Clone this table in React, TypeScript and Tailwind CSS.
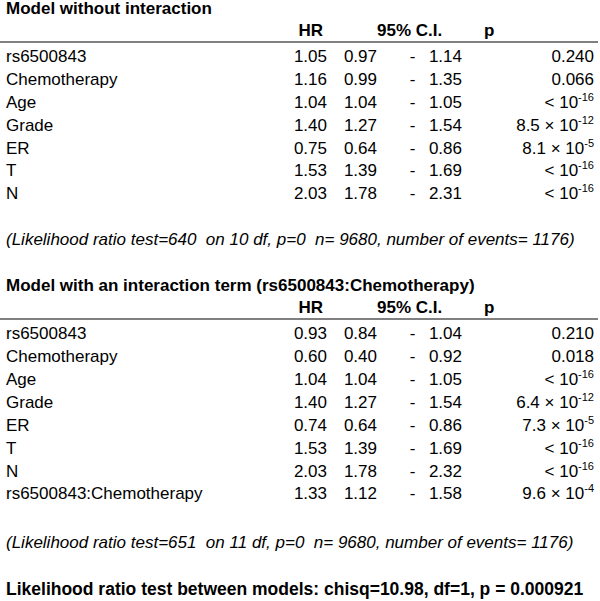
import React from "react";

type Row = { label: string; hr: string; lo: string; hi: string; p: React.ReactNode };

const P = ({ base, exp }: { base: string; exp: string }) => (
  <span>
    {base}
    <sup className="text-[11px] top-[-7px]">{exp}</sup>
  </span>
);

const rows1: Row[] = [
  { label: "rs6500843", hr: "1.05", lo: "0.97", hi: "1.14", p: "0.240" },
  { label: "Chemotherapy", hr: "1.16", lo: "0.99", hi: "1.35", p: "0.066" },
  { label: "Age", hr: "1.04", lo: "1.04", hi: "1.05", p: <P base="< 10" exp="-16" /> },
  { label: "Grade", hr: "1.40", lo: "1.27", hi: "1.54", p: <P base="8.5 × 10" exp="-12" /> },
  { label: "ER", hr: "0.75", lo: "0.64", hi: "0.86", p: <P base="8.1 × 10" exp="-5" /> },
  { label: "T", hr: "1.53", lo: "1.39", hi: "1.69", p: <P base="< 10" exp="-16" /> },
  { label: "N", hr: "2.03", lo: "1.78", hi: "2.31", p: <P base="< 10" exp="-16" /> },
];

const rows2: Row[] = [
  { label: "rs6500843", hr: "0.93", lo: "0.84", hi: "1.04", p: "0.210" },
  { label: "Chemotherapy", hr: "0.60", lo: "0.40", hi: "0.92", p: "0.018" },
  { label: "Age", hr: "1.04", lo: "1.04", hi: "1.05", p: <P base="< 10" exp="-16" /> },
  { label: "Grade", hr: "1.40", lo: "1.27", hi: "1.54", p: <P base="6.4 × 10" exp="-12" /> },
  { label: "ER", hr: "0.74", lo: "0.64", hi: "0.86", p: <P base="7.3 × 10" exp="-5" /> },
  { label: "T", hr: "1.53", lo: "1.39", hi: "1.69", p: <P base="< 10" exp="-16" /> },
  { label: "N", hr: "2.03", lo: "1.78", hi: "2.32", p: <P base="< 10" exp="-16" /> },
  { label: "rs6500843:Chemotherapy", hr: "1.33", lo: "1.12", hi: "1.58", p: <P base="9.6 × 10" exp="-4" /> },
];

const grid = "grid grid-cols-[280px_41px_50px_48px_37px_132px] pl-[6px]";

function Table({ rows }: { rows: Row[] }) {
  return (
    <div>
      <div className={`${grid} mt-[4px] h-[20px] leading-[20px] font-bold`}>
        <div />
        <div className="text-right pr-[4px]">HR</div>
        <div className="col-span-3 pl-[50px] whitespace-nowrap">95% C.I.</div>
        <div className="pl-[22px]">p</div>
      </div>
      <div className="h-[2px] w-[598px] bg-[#808080]" />
      <div className="mt-[3px]">
        {rows.map((r) => (
          <div key={r.label} className={`${grid} h-[22.9px] leading-[22.9px]`}>
            <div className="whitespace-nowrap">{r.label}</div>
            <div className="text-right">{r.hr}</div>
            <div className="text-right">{r.lo}</div>
            <div className="pl-[23px] text-center">-</div>
            <div className="text-right">{r.hi}</div>
            <div className="text-right whitespace-nowrap">{r.p}</div>
          </div>
        ))}
      </div>
    </div>
  );
}

export default function App() {
  return (
    <div
      className="w-[600px] h-[601px] bg-white text-black text-[17px] overflow-hidden"
      style={{ fontFamily: '"Liberation Sans", Arial, sans-serif' }}
    >
      <div className="pl-[6px] h-[17px] leading-[17px] font-bold whitespace-nowrap">Model without interaction</div>
      <Table rows={rows1} />
      <div className="pl-[6px] mt-[22px] h-[23px] leading-[23px] italic whitespace-pre">
        (Likelihood ratio test=640  on 10 df, p=0  n= 9680, number of events= 1176)
      </div>
      <div className="pl-[6px] mt-[26px] h-[17px] leading-[17px] font-bold whitespace-nowrap">
        Model with an interaction term (rs6500843:Chemotherapy)
      </div>
      <Table rows={rows2} />
      <div className="pl-[6px] mt-[25px] h-[23px] leading-[23px] italic whitespace-pre">
        (Likelihood ratio test=651  on 11 df, p=0  n= 9680, number of events= 1176)
      </div>
      <div className="pl-[6px] mt-[27px] h-[17px] leading-[17px] text-[17.5px] font-bold whitespace-nowrap">
        Likelihood ratio test between models: chisq=10.98, df=1, p = 0.000921
      </div>
    </div>
  );
}
